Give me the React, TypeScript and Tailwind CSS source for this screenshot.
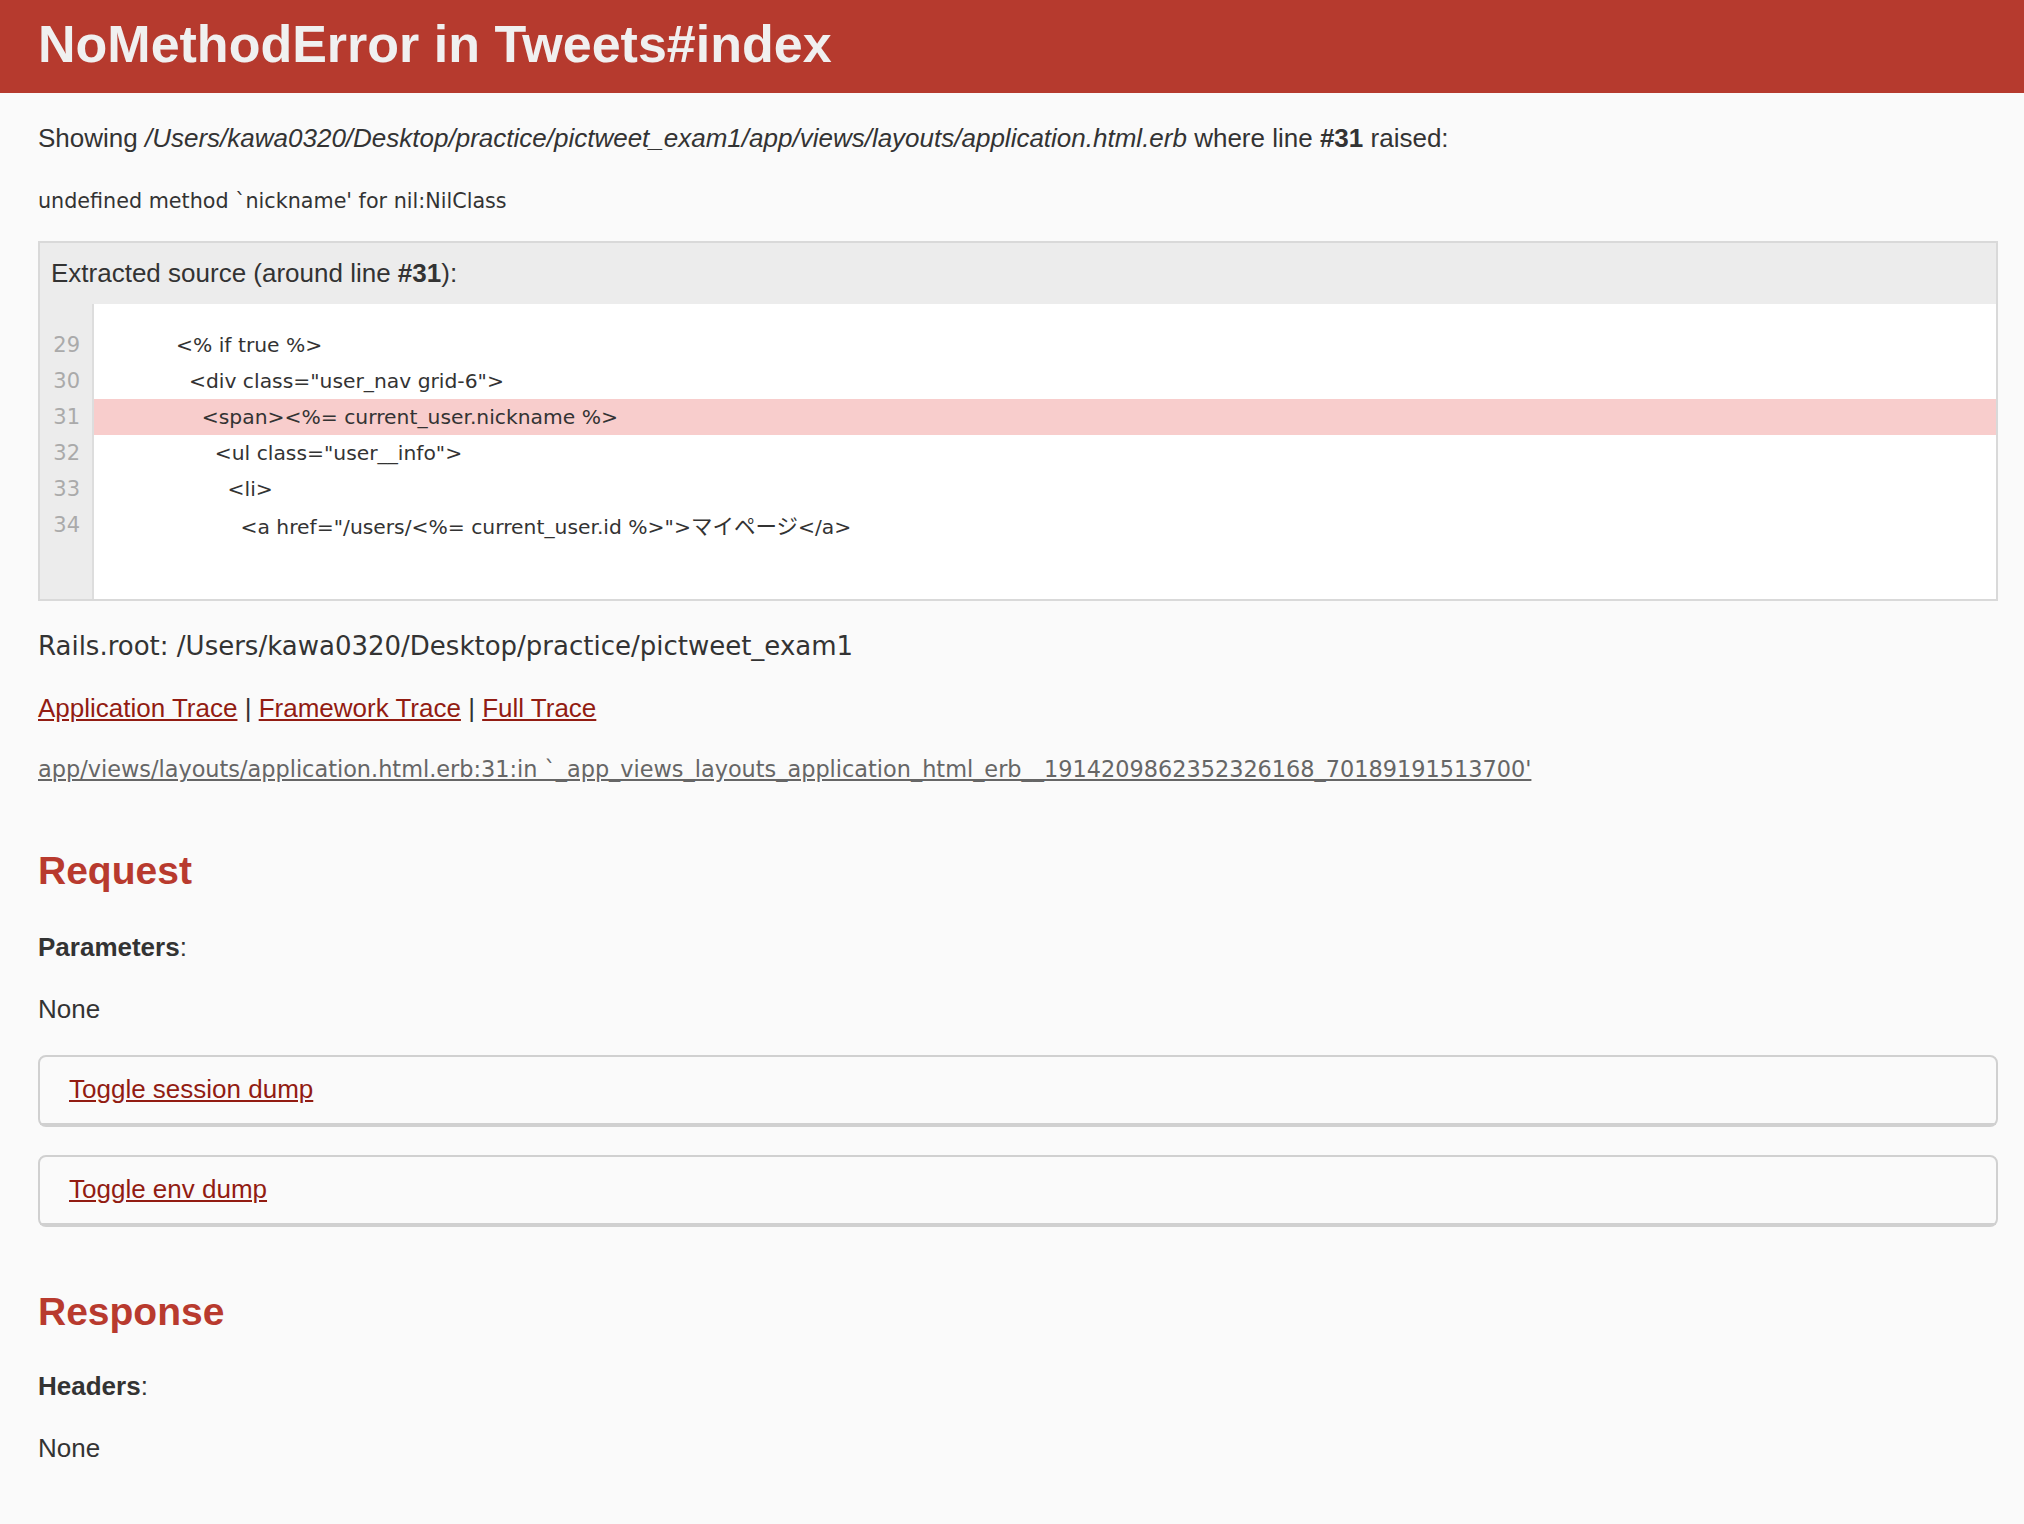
import React from "react";

const sans = "font-['Liberation_Sans','Helvetica',Arial,sans-serif]";
const code = "font-['DejaVu_Sans','Noto_Sans_CJK_JP',sans-serif]";

const sourceLines = [
  { no: 29, text: "         <% if true %>" },
  { no: 30, text: "           <div class=\"user_nav grid-6\">" },
  { no: 31, text: "             <span><%= current_user.nickname %>", active: true },
  { no: 32, text: "               <ul class=\"user__info\">" },
  { no: 33, text: "                 <li>" },
  { no: 34, text: "                   <a href=\"/users/<%= current_user.id %>\">", jp: "マイページ", tail: "</a>" },
];

function Toggle({ label }: { label: string }) {
  return (
    <div className="rounded-[8px] border-2 border-[#d0d0d0]">
      <div className="border-b-2 border-[#d0d0d0] px-[29px] pt-[14px] pb-[16px] leading-[36px]">
        <a href="#" className="text-[#921c12] underline">
          {label}
        </a>
      </div>
    </div>
  );
}

export default function App() {
  return (
    <div className={`min-h-screen bg-[#fafafa] text-[#333] text-[26px] leading-[36px] ${sans}`}>
      {/* Header */}
      <header className="h-[93px] bg-[#b63a2e] px-[38px] pt-[16px]">
        <h1 className="text-[52px] leading-[57px] font-bold text-[#f0f0f0]">NoMethodError in Tweets#index</h1>
      </header>

      <div className="pl-[38px] pr-[26px]">
        <p className="mt-[27px]">
          Showing <i>/Users/kawa0320/Desktop/practice/pictweet_exam1/app/views/layouts/application.html.erb</i> where
          line <b>#31</b> raised:
        </p>

        <p className={`mt-[27px] text-[20.7px] ${code}`}>undefined method `nickname' for nil:NilClass</p>

        {/* Extracted source */}
        <div className="mt-[22px] border-2 border-[#d9d9d9] bg-[#ececec]">
          <div className="px-[11px] pt-[12px] pb-[13px]">
            Extracted source (around line <b>#31</b>):
          </div>
          <div className="flex bg-white h-[295px]">
            <div
              className={`w-[54px] shrink-0 border-r-2 border-[#dddddd] bg-[#ececec] pt-[23px] pr-[12px] text-right text-[21px] text-[#aaaaaa] ${code}`}
            >
              {sourceLines.map((l) => (
                <div key={l.no} className="leading-[36px]">
                  {l.no}
                </div>
              ))}
            </div>
            <div className={`flex-1 pt-[23px] text-[20.3px] ${code}`}>
              {sourceLines.map((l) => (
                <div
                  key={l.no}
                  className={`h-[36px] leading-[36px] pl-[24px] whitespace-pre ${l.active ? "bg-[#f8cdcc]" : ""}`}
                >
                  {l.text}
                  {l.jp && <span className="text-[21.5px] font-['Noto_Sans_CJK_JP',sans-serif]">{l.jp}</span>}
                  {l.tail}
                </div>
              ))}
            </div>
          </div>
        </div>

        <p className={`mt-[27px] ${code}`}>Rails.root: /Users/kawa0320/Desktop/practice/pictweet_exam1</p>

        <p className="mt-[26px]">
          <a href="#" className="text-[#921c12] underline">Application Trace</a> |{" "}
          <a href="#" className="text-[#921c12] underline">Framework Trace</a> |{" "}
          <a href="#" className="text-[#921c12] underline">Full Trace</a>
        </p>

        <p className={`mt-[25px] text-[22.4px] ${code}`}>
          <a href="#" className="text-[#666] underline">
            app/views/layouts/application.html.erb:31:in `_app_views_layouts_application_html_erb__1914209862352326168_70189191513700'
          </a>
        </p>

        {/* Request */}
        <h2 className="mt-[59px] text-[39px] leading-[50px] font-bold text-[#b83a2e]">Request</h2>
        <p className="mt-[33px]">
          <b>Parameters</b>:
        </p>
        <p className="mt-[26px]">None</p>

        <div className="mt-[28px] flex flex-col gap-[28px]">
          <Toggle label="Toggle session dump" />
          <Toggle label="Toggle env dump" />
        </div>

        {/* Response */}
        <h2 className="mt-[60px] text-[39px] leading-[50px] font-bold text-[#b83a2e]">Response</h2>
        <p className="mt-[31px]">
          <b>Headers</b>:
        </p>
        <p className="mt-[26px]">None</p>
      </div>
    </div>
  );
}
